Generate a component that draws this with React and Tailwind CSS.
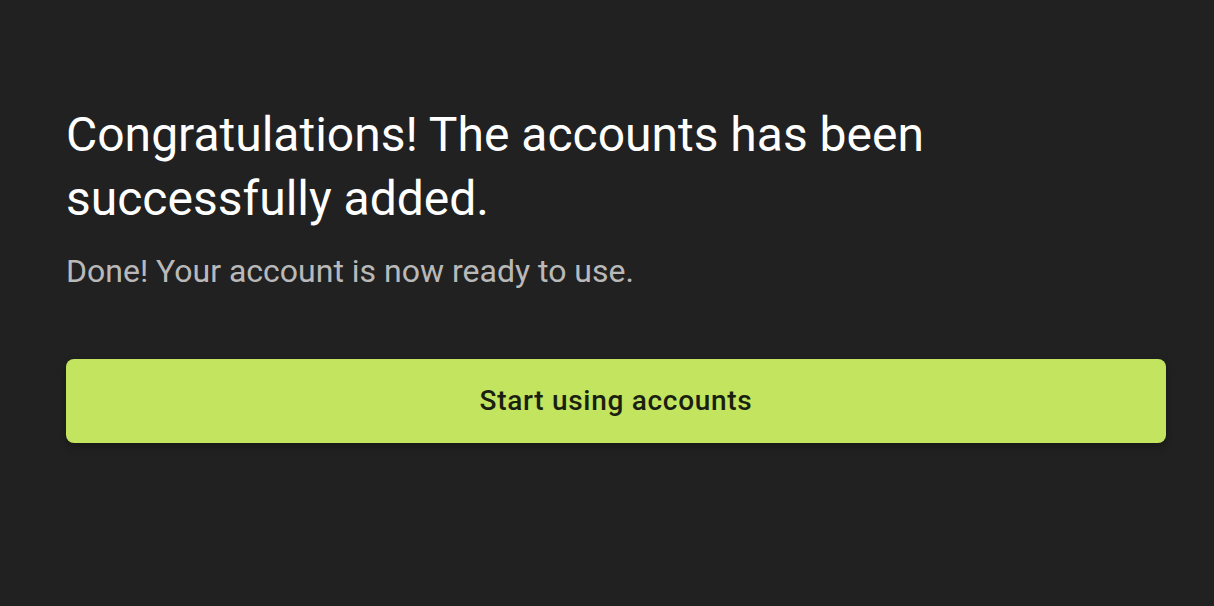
export default function App() {
  return (
    <main className="min-h-screen bg-[#212121] pt-[103px] pr-12 pb-10 pl-[66px] font-[Roboto,sans-serif]">
      <h1 className="max-w-[1000px] text-[48px] leading-[64px] text-white">
        Congratulations! The accounts has been successfully added.
      </h1>
      <p className="mt-4 text-[32px] leading-[48px] text-white/70">
        Done! Your account is now ready to use.
      </p>
      <button
        type="button"
        className="mt-16 w-full rounded-lg bg-[#c2e45e] py-[18px] text-[28px] leading-[48px] font-medium tracking-wide text-[#1b1f10] shadow-[0_4px_8px_rgba(0,0,0,0.3)]"
      >
        Start using accounts
      </button>
    </main>
  );
}
